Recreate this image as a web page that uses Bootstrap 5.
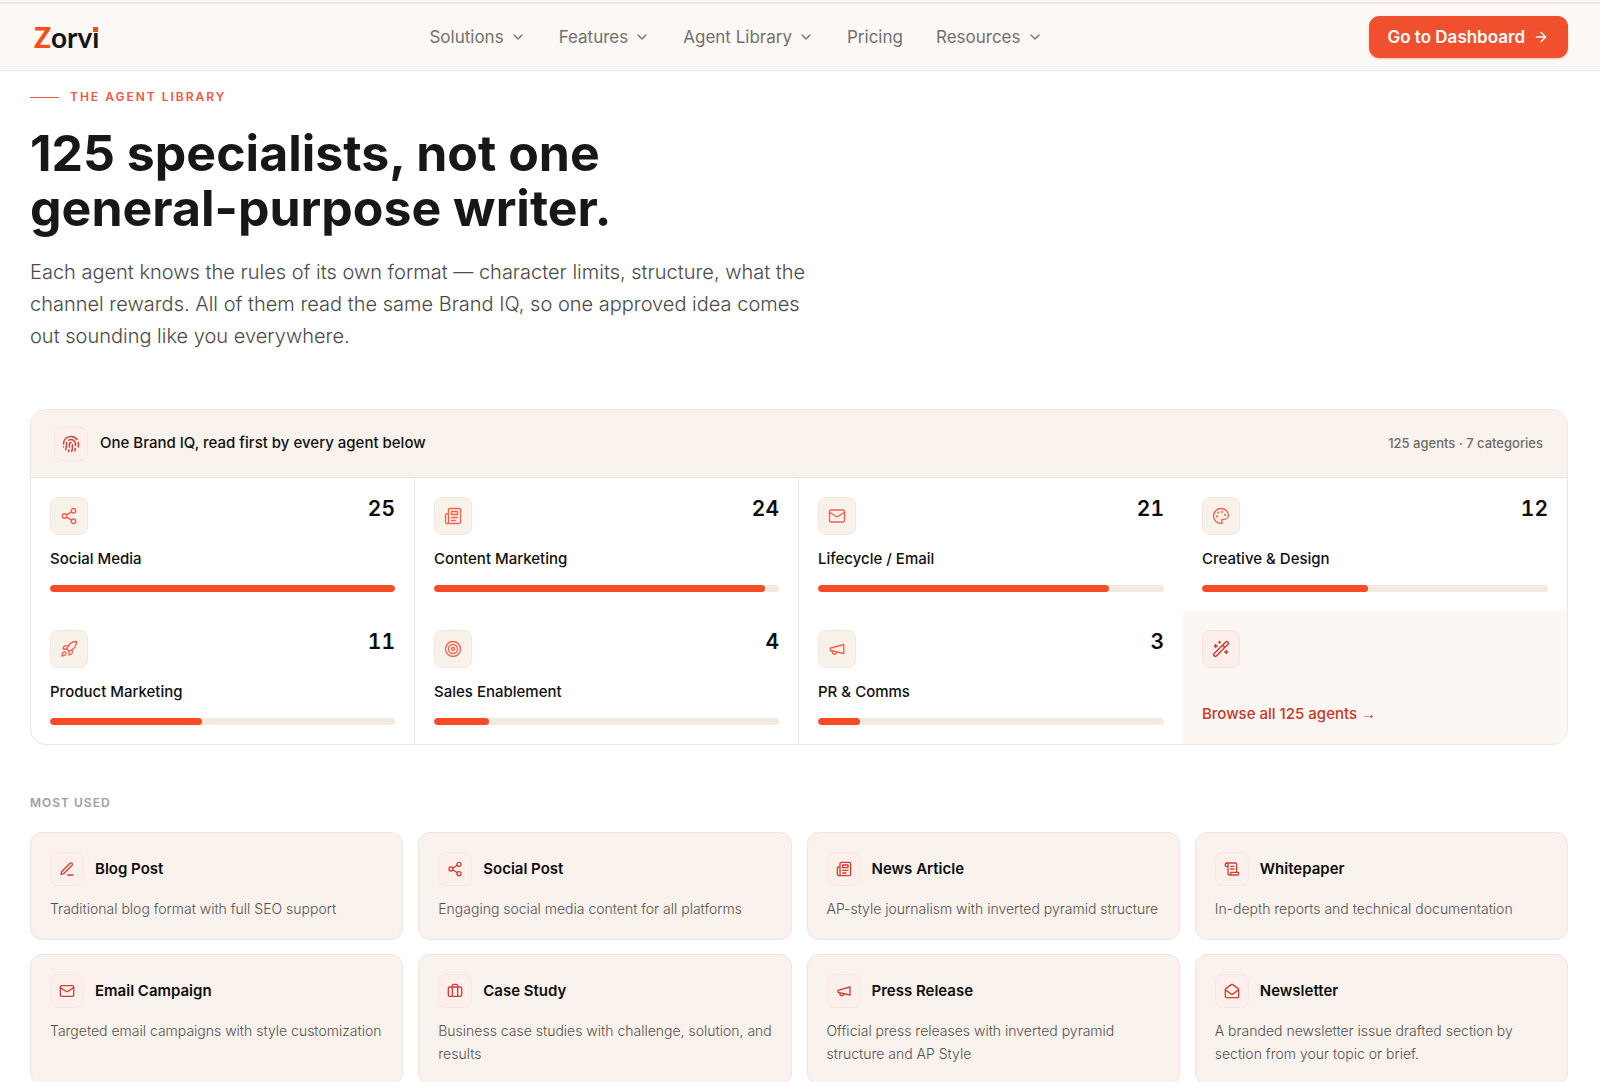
<!DOCTYPE html>
<html lang="en">
<head>
<meta charset="utf-8">
<meta name="viewport" content="width=device-width, initial-scale=1">
<title>Zorvi – The Agent Library</title>
<link href="https://cdn.jsdelivr.net/npm/bootstrap@5.3.0/dist/css/bootstrap.min.css" rel="stylesheet">
<style>
  :root { --accent: #f44e2a; --deep: #c5382a; --ink: #171717; --cream: #faf2ec; --line: #ebe6e1; --muted: #66625f; }
  body { font-family: Inter, "Open Sans", sans-serif; color: var(--ink); background: #fff; }
  a { text-decoration: none; color: inherit; }
  .ico { fill: none; stroke: currentColor; stroke-width: 2; stroke-linecap: round; stroke-linejoin: round; flex: none; width: 16px; height: 16px; }
  .gutter { padding-left: 30px; padding-right: 32px; }
  .topstrip { height: 4px; background: #fff5f3; border-bottom: 2px solid #f2e5e3; }
  .site-nav { background: #fcf8f5; border-bottom: 1px solid #efe5e2; height: 67px; --bs-navbar-padding-y: 0; }
  .logo { font: 700 28px/32px Lato, sans-serif; color: #141414; padding: 0 4px; }
  .logo .z-mark { color: #fb4c1c; font-weight: 900; }
  .logo .i-mark { position: relative; }
  .logo .i-mark::after { content: ""; position: absolute; left: 1px; top: 7px; width: 5px; height: 5px; background: #fb4c1c; }
  .menu { gap: 33px; font-size: 17px; line-height: 24px; color: #74706d; }
  .site-nav .menu .nav-link { display: flex; align-items: center; gap: 6px; padding: 0; color: inherit; }
  .cta { --bs-btn-color: #fff; --bs-btn-bg: #f1502f; --bs-btn-border-color: #f1502f; --bs-btn-hover-color: #fff; --bs-btn-hover-bg: #df4424; height: 42px; padding: 0 18px; border-radius: 10px; font-size: 17px; line-height: 24px; font-weight: 600; box-shadow: 0 1px 2px #f1502f55; }
  .eyebrow { margin-top: 16px; gap: 11px; color: #ee5845; font-size: 12px; line-height: 20px; font-weight: 600; letter-spacing: 2px; }
  .eyebrow::before { content: ""; width: 29px; border-top: 1px solid #ee5845; }
  .headline { font-size: 50px; line-height: 55px; font-weight: 700; margin: 19px 0 0; }
  .intro { font-size: 20px; line-height: 32px; font-weight: 300; color: #4c4947; margin: 20px 0 0; max-width: 800px; }
  .panel { margin-top: 57px; border: 1px solid var(--line); border-radius: 16px; overflow: hidden; }
  .panel-top { height: 68px; padding: 0 24px 0 23px; background: var(--cream); border-bottom: 1px solid var(--line); gap: 12px; font-size: 15px; font-weight: 500; color: #0f0f0f; }
  .panel-top .total { font-size: 13px; font-weight: 500; color: #716c69; }
  .tile { display: flex; align-items: center; justify-content: center; flex: none; border-radius: 8px; width: 38px; height: 38px; background: #f8f2eb; border: 1px solid #f0e7df; color: #f4604b; }
  .tile .ico { width: 18px; height: 18px; stroke-width: 1.75; }
  .tile-sm { width: 34px; height: 34px; background: #fdefeb; border-color: #f8e6e1; color: #cf4034; }
  .tile-sm .ico { width: 16px; height: 16px; stroke-width: 2; }
  .tile-lg .ico { width: 18px; height: 18px; }
  .tile-pink { background: #fceeeb; border-color: #f8e1dd; color: var(--deep); }
  .cell { padding: 19px; height: 133px; display: flex; flex-direction: column; }
  .ruled { border-right: 1px solid var(--line); }
  .count { font-size: 21px; line-height: 24px; font-weight: 600; font-variant-numeric: tabular-nums; color: #0c0c0c; }
  .cell-name { font-size: 15px; line-height: 22px; font-weight: 500; margin-top: 13px; color: #0f0f0f; }
  .meter { --bs-progress-height: 7px; --bs-progress-bg: #f2e9e0; --bs-progress-bar-bg: #f84c26; --bs-progress-border-radius: 4px; margin-top: auto; }
  .meter .progress-bar { border-radius: 4px; }
  .browse { background: #fcf7f3; }
  .browse a { color: var(--deep); font-size: 15px; line-height: 22px; font-weight: 500; margin-top: auto; }
  .browse .go { font-family: "Liberation Sans", sans-serif; font-weight: 400; }
  .section-label { font-size: 12px; line-height: 20px; font-weight: 600; letter-spacing: 1px; color: #a29d9a; margin: 48px 0 19px; }
  .agents { --bs-gutter-x: 15px; --bs-gutter-y: 14px; }
  .agent { display: block; height: 100%; background: var(--cream); border: 1px solid var(--line); border-radius: 12px; padding: 19px 14px 19px 19px; }
  .agent-head { gap: 11px; }
  .agent-name { font-size: 15px; line-height: 22px; font-weight: 600; margin: 0; color: #0d0d0d; }
  .agent-text { font-size: 14px; line-height: 23px; font-weight: 300; color: #55514e; margin: 11px 0 0; }
</style>
<script src="https://cdn.jsdelivr.net/npm/bootstrap@5.3.0/dist/js/bootstrap.bundle.min.js"></script>
</head>
<body>
<svg class="d-none" aria-hidden="true">
  <symbol id="chev" viewBox="0 0 24 24"><path d="m6 9 6 6 6-6"/></symbol>
  <symbol id="arrow" viewBox="0 0 24 24"><path d="M5 12h14M12 5l7 7-7 7"/></symbol>
  <symbol id="finger" viewBox="0 0 24 24"><path d="M12 10a2 2 0 0 0-2 2c0 1.020-.1 2.510-.26 4"/><path d="M14 13.120c0 2.380 0 6.380-1 8.880"/><path d="M17.290 21.020c.12-.6.430-2.300.500-3.020"/><path d="M2 12a10 10 0 0 1 18-6"/><path d="M2 16h.01"/><path d="M21.800 16c.2-2 .131-5.354 0-6"/><path d="M5 19.500C5.500 18 6 15 6 12a6 6 0 0 1 .340-2"/><path d="M8.650 22c.210-.660.450-1.320.570-2"/><path d="M9 6.800a6 6 0 0 1 9 5.200v2"/></symbol>
  <symbol id="share" viewBox="0 0 24 24"><circle cx="18" cy="5" r="3"/><circle cx="6" cy="12" r="3"/><circle cx="18" cy="19" r="3"/><path d="m8.590 13.510 6.830 3.980M15.410 6.510l-6.820 3.980"/></symbol>
  <symbol id="news" viewBox="0 0 24 24"><path d="M4 22h16a2 2 0 0 0 2-2V4a2 2 0 0 0-2-2H8a2 2 0 0 0-2 2v16a2 2 0 0 1-4 0v-9a2 2 0 0 1 2-2h2"/><path d="M18 14h-8M15 18h-5M10 6h8v4h-8z"/></symbol>
  <symbol id="mail" viewBox="0 0 24 24"><rect x="2" y="4" width="20" height="16" rx="2"/><path d="m22 7-8.970 5.700a1.940 1.940 0 0 1-2.060 0L2 7"/></symbol>
  <symbol id="palette" viewBox="0 0 24 24"><g fill="currentColor"><circle cx="13.500" cy="6.500" r=".5"/><circle cx="17.500" cy="10.500" r=".5"/><circle cx="8.500" cy="7.500" r=".5"/><circle cx="6.500" cy="12.500" r=".5"/></g><path d="M12 2C6.500 2 2 6.500 2 12s4.500 10 10 10c.926 0 1.648-.746 1.648-1.688 0-.437-.180-.835-.437-1.125-.290-.289-.438-.652-.438-1.125a1.640 1.640 0 0 1 1.668-1.668h1.996c3.051 0 5.555-2.503 5.555-5.554C21.965 6.012 17.461 2 12 2z"/></symbol>
  <symbol id="rocket" viewBox="0 0 24 24"><path d="M4.500 16.500c-1.500 1.260-2 5-2 5s3.740-.5 5-2c.710-.840.700-2.130-.090-2.910a2.180 2.180 0 0 0-2.910-.090z"/><path d="m12 15-3-3a22 22 0 0 1 2-3.950A12.880 12.880 0 0 1 22 2c0 2.720-.780 7.500-6 11a22.350 22.350 0 0 1-4 2z"/><path d="M9 12H4s.550-3.030 2-4c1.620-1.080 5 0 5 0M12 15v5s3.030-.550 4-2c1.080-1.620 0-5 0-5"/></symbol>
  <symbol id="target" viewBox="0 0 24 24"><circle cx="12" cy="12" r="10"/><circle cx="12" cy="12" r="6"/><circle cx="12" cy="12" r="2"/></symbol>
  <symbol id="horn" viewBox="0 0 24 24"><path d="m3 11 18-5v12L3 14v-3z"/><path d="M11.600 16.800a3 3 0 1 1-5.800-1.600"/></symbol>
  <symbol id="wand" viewBox="0 0 24 24"><path d="m21.640 3.640-1.280-1.280a1.210 1.210 0 0 0-1.720 0L2.360 18.640a1.210 1.210 0 0 0 0 1.720l1.280 1.280a1.200 1.200 0 0 0 1.720 0L21.640 5.360a1.200 1.200 0 0 0 0-1.720M14 7l3 3M5 6v4M19 14v4M10 2v2M7 8H3M21 16h-4M11 3H9"/></symbol>
  <symbol id="pen" viewBox="0 0 24 24"><path d="M13 21h8M16.500 3.500a2.120 2.120 0 0 1 3 3L7 19l-4 1 1-4Z"/></symbol>
  <symbol id="scroll" viewBox="0 0 24 24"><path d="M15 12h-5M15 8h-5M19 17V5a2 2 0 0 0-2-2H4"/><path d="M8 21h12a2 2 0 0 0 2-2v-1a1 1 0 0 0-1-1H11a1 1 0 0 0-1 1v1a2 2 0 1 1-4 0V5a2 2 0 1 0-4 0v2a1 1 0 0 0 1 1h3"/></symbol>
  <symbol id="case" viewBox="0 0 24 24"><path d="M16 20V4a2 2 0 0 0-2-2h-4a2 2 0 0 0-2 2v16"/><rect x="2" y="6" width="20" height="14" rx="2"/></symbol>
  <symbol id="openmail" viewBox="0 0 24 24"><path d="M21.200 8.400c.5.380.8.970.8 1.600v10a2 2 0 0 1-2 2H4a2 2 0 0 1-2-2V10a2 2 0 0 1 .8-1.600l8-6a2 2 0 0 1 2.400 0l8 6Z"/><path d="m22 10-8.970 6.700a1.940 1.940 0 0 1-2.060 0L2 10"/></symbol>
</svg>

<div class="topstrip"></div>
<header class="navbar navbar-expand site-nav gutter justify-content-between">
  <a class="logo" href="#"><span class="z-mark">Z</span>orv<span class="i-mark">i</span></a>
  <nav class="navbar-nav menu">
    <a class="nav-link" href="#">Solutions <svg class="ico"><use href="#chev"/></svg></a>
    <a class="nav-link" href="#">Features <svg class="ico"><use href="#chev"/></svg></a>
    <a class="nav-link" href="#">Agent Library <svg class="ico"><use href="#chev"/></svg></a>
    <a class="nav-link" href="#">Pricing</a>
    <a class="nav-link" href="#">Resources <svg class="ico"><use href="#chev"/></svg></a>
  </nav>
  <button type="button" class="btn cta d-flex align-items-center gap-2">Go to Dashboard <svg class="ico"><use href="#arrow"/></svg></button>
</header>

<main class="gutter">
  <div class="eyebrow d-flex align-items-center">THE AGENT LIBRARY</div>
  <h1 class="headline">125 specialists, not one<br>general-purpose writer.</h1>
  <p class="intro">Each agent knows the rules of its own format — character limits, structure, what the channel rewards. All of them read the same Brand IQ, so one approved idea comes out sounding like you everywhere.</p>

  <section class="panel">
    <div class="panel-top d-flex align-items-center">
      <span class="tile tile-sm tile-lg"><svg class="ico"><use href="#finger"/></svg></span>
      <span>One Brand IQ, read first by every agent below</span>
      <span class="total ms-auto">125 agents · 7 categories</span>
    </div>
    <div class="row row-cols-4 g-0">
      <div class="col cell ruled">
        <div class="d-flex justify-content-between"><span class="tile"><svg class="ico"><use href="#share"/></svg></span><span class="count">25</span></div>
        <div class="cell-name">Social Media</div>
        <div class="progress meter"><div class="progress-bar" style="width:100%"></div></div>
      </div>
      <div class="col cell ruled">
        <div class="d-flex justify-content-between"><span class="tile"><svg class="ico"><use href="#news"/></svg></span><span class="count">24</span></div>
        <div class="cell-name">Content Marketing</div>
        <div class="progress meter"><div class="progress-bar" style="width:96%"></div></div>
      </div>
      <div class="col cell">
        <div class="d-flex justify-content-between"><span class="tile"><svg class="ico"><use href="#mail"/></svg></span><span class="count">21</span></div>
        <div class="cell-name">Lifecycle / Email</div>
        <div class="progress meter"><div class="progress-bar" style="width:84%"></div></div>
      </div>
      <div class="col cell">
        <div class="d-flex justify-content-between"><span class="tile"><svg class="ico"><use href="#palette"/></svg></span><span class="count">12</span></div>
        <div class="cell-name">Creative &amp; Design</div>
        <div class="progress meter"><div class="progress-bar" style="width:48%"></div></div>
      </div>
      <div class="col cell ruled">
        <div class="d-flex justify-content-between"><span class="tile"><svg class="ico"><use href="#rocket"/></svg></span><span class="count">11</span></div>
        <div class="cell-name">Product Marketing</div>
        <div class="progress meter"><div class="progress-bar" style="width:44%"></div></div>
      </div>
      <div class="col cell ruled">
        <div class="d-flex justify-content-between"><span class="tile"><svg class="ico"><use href="#target"/></svg></span><span class="count">4</span></div>
        <div class="cell-name">Sales Enablement</div>
        <div class="progress meter"><div class="progress-bar" style="width:16%"></div></div>
      </div>
      <div class="col cell">
        <div class="d-flex justify-content-between"><span class="tile"><svg class="ico"><use href="#horn"/></svg></span><span class="count">3</span></div>
        <div class="cell-name">PR &amp; Comms</div>
        <div class="progress meter"><div class="progress-bar" style="width:12%"></div></div>
      </div>
      <div class="col cell browse">
        <span class="tile tile-pink"><svg class="ico"><use href="#wand"/></svg></span>
        <a href="#">Browse all 125 agents <span class="go">→</span></a>
      </div>
    </div>
  </section>

  <h2 class="section-label">MOST USED</h2>
  <div class="row row-cols-4 agents">
    <div class="col"><a class="agent" href="#">
      <div class="agent-head d-flex align-items-center"><span class="tile tile-sm"><svg class="ico"><use href="#pen"/></svg></span><h3 class="agent-name">Blog Post</h3></div>
      <p class="agent-text">Traditional blog format with full SEO support</p></a></div>
    <div class="col"><a class="agent" href="#">
      <div class="agent-head d-flex align-items-center"><span class="tile tile-sm"><svg class="ico"><use href="#share"/></svg></span><h3 class="agent-name">Social Post</h3></div>
      <p class="agent-text">Engaging social media content for all platforms</p></a></div>
    <div class="col"><a class="agent" href="#">
      <div class="agent-head d-flex align-items-center"><span class="tile tile-sm"><svg class="ico"><use href="#news"/></svg></span><h3 class="agent-name">News Article</h3></div>
      <p class="agent-text">AP-style journalism with inverted pyramid structure</p></a></div>
    <div class="col"><a class="agent" href="#">
      <div class="agent-head d-flex align-items-center"><span class="tile tile-sm"><svg class="ico"><use href="#scroll"/></svg></span><h3 class="agent-name">Whitepaper</h3></div>
      <p class="agent-text">In-depth reports and technical documentation</p></a></div>
    <div class="col"><a class="agent" href="#">
      <div class="agent-head d-flex align-items-center"><span class="tile tile-sm"><svg class="ico"><use href="#mail"/></svg></span><h3 class="agent-name">Email Campaign</h3></div>
      <p class="agent-text">Targeted email campaigns with style customization</p></a></div>
    <div class="col"><a class="agent" href="#">
      <div class="agent-head d-flex align-items-center"><span class="tile tile-sm"><svg class="ico"><use href="#case"/></svg></span><h3 class="agent-name">Case Study</h3></div>
      <p class="agent-text">Business case studies with challenge, solution, and results</p></a></div>
    <div class="col"><a class="agent" href="#">
      <div class="agent-head d-flex align-items-center"><span class="tile tile-sm"><svg class="ico"><use href="#horn"/></svg></span><h3 class="agent-name">Press Release</h3></div>
      <p class="agent-text">Official press releases with inverted pyramid structure and AP Style</p></a></div>
    <div class="col"><a class="agent" href="#">
      <div class="agent-head d-flex align-items-center"><span class="tile tile-sm"><svg class="ico"><use href="#openmail"/></svg></span><h3 class="agent-name">Newsletter</h3></div>
      <p class="agent-text">A branded newsletter issue drafted section by section from your topic or brief.</p></a></div>
  </div>
</main>
</body>
</html>
